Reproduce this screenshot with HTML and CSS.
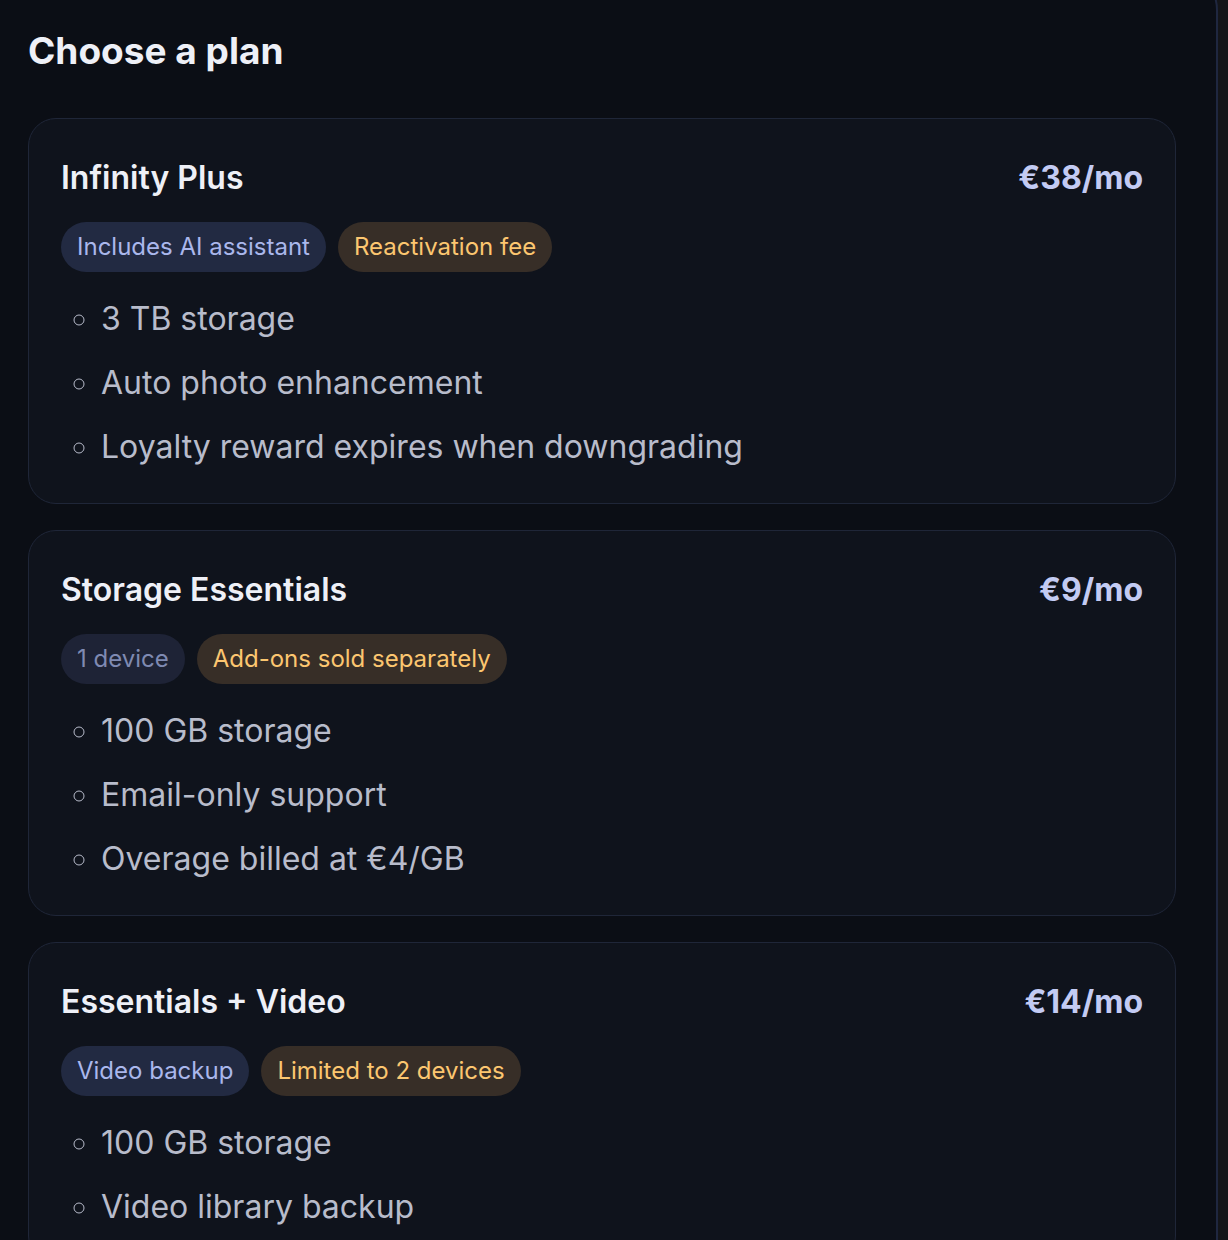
FILE: index.html
```html
<!DOCTYPE html>
<html lang="en">
<head>
  <meta charset="UTF-8" />
  <title>Choose a plan</title>
  <meta name="viewport" content="width=device-width, initial-scale=1.0" />
  <link rel="stylesheet" href="styles.css">
</head>
<body>
  <div class="panel">
    <h2>Choose a plan</h2>

    <div class="plans">
      <div class="plan">
        <div class="plan-head">
          <span class="plan-name">Infinity Plus</span>
          <span class="plan-price">€38/mo</span>
        </div>
        <div class="tags">
          <span class="tag tag-info">Includes AI assistant</span>
          <span class="tag tag-warn">Reactivation fee</span>
        </div>
        <ul class="features">
          <li>3 TB storage</li>
          <li>Auto photo enhancement</li>
          <li>Loyalty reward expires when downgrading</li>
        </ul>
      </div>

      <div class="plan">
        <div class="plan-head">
          <span class="plan-name">Storage Essentials</span>
          <span class="plan-price">€9/mo</span>
        </div>
        <div class="tags">
          <span class="tag tag-muted">1 device</span>
          <span class="tag tag-warn">Add-ons sold separately</span>
        </div>
        <ul class="features">
          <li>100 GB storage</li>
          <li>Email-only support</li>
          <li>Overage billed at €4/GB</li>
        </ul>
      </div>

      <div class="plan">
        <div class="plan-head">
          <span class="plan-name">Essentials + Video</span>
          <span class="plan-price">€14/mo</span>
        </div>
        <div class="tags">
          <span class="tag tag-info">Video backup</span>
          <span class="tag tag-warn">Limited to 2 devices</span>
        </div>
        <ul class="features">
          <li>100 GB storage</li>
          <li>Video library backup</li>
        </ul>
      </div>
    </div>
  </div>
</body>
</html>
```

FILE: styles.css
```css
body {
  margin: 0;
  background-color: #141519;
  font-family: Inter, "Noto Sans", sans-serif;
  color: #eef0f7;
  overflow: hidden;
}

.panel {
  margin: -30px 10px 0 -14px;
  padding: 55px 40px 0 40px;
  border: 2px solid #1f2740;
  border-radius: 40px;
  background-color: #0b0e15;
  min-height: 1400px;
}

h2 {
  margin: 0 0 43px;
  font-size: 37px;
  line-height: 48px;
  font-weight: 700;
  color: #eef0f7;
}

.plans {
  display: flex;
  flex-direction: column;
  gap: 26px;
}

.plan {
  background-color: #0f131c;
  border: 1px solid #1f2638;
  border-radius: 28px;
  padding: 34px 32px 32px;
}

.plan-head {
  display: flex;
  justify-content: space-between;
  align-items: baseline;
  font-size: 32px;
  line-height: 50px;
}

.plan-name {
  font-weight: 600;
  color: #eef0f7;
}

.plan-price {
  font-weight: 700;
  color: #c3cbf3;
}

.tags {
  display: flex;
  gap: 12px;
  margin-top: 19px;
}

.tag {
  font-size: 24px;
  line-height: 32px;
  padding: 9px 16px;
  border-radius: 25px;
}

.tag-info {
  background-color: #222a42;
  color: #aab7ec;
}

.tag-muted {
  background-color: #1e2336;
  color: #7f8ab2;
}

.tag-warn {
  background-color: #372e27;
  color: #fcc670;
}

.features {
  margin: 23px 0 0;
  padding-left: 40px;
  list-style-type: circle;
  display: flex;
  flex-direction: column;
  gap: 16px;
  font-size: 32px;
  line-height: 48px;
  color: #b8bccb;
}
```
